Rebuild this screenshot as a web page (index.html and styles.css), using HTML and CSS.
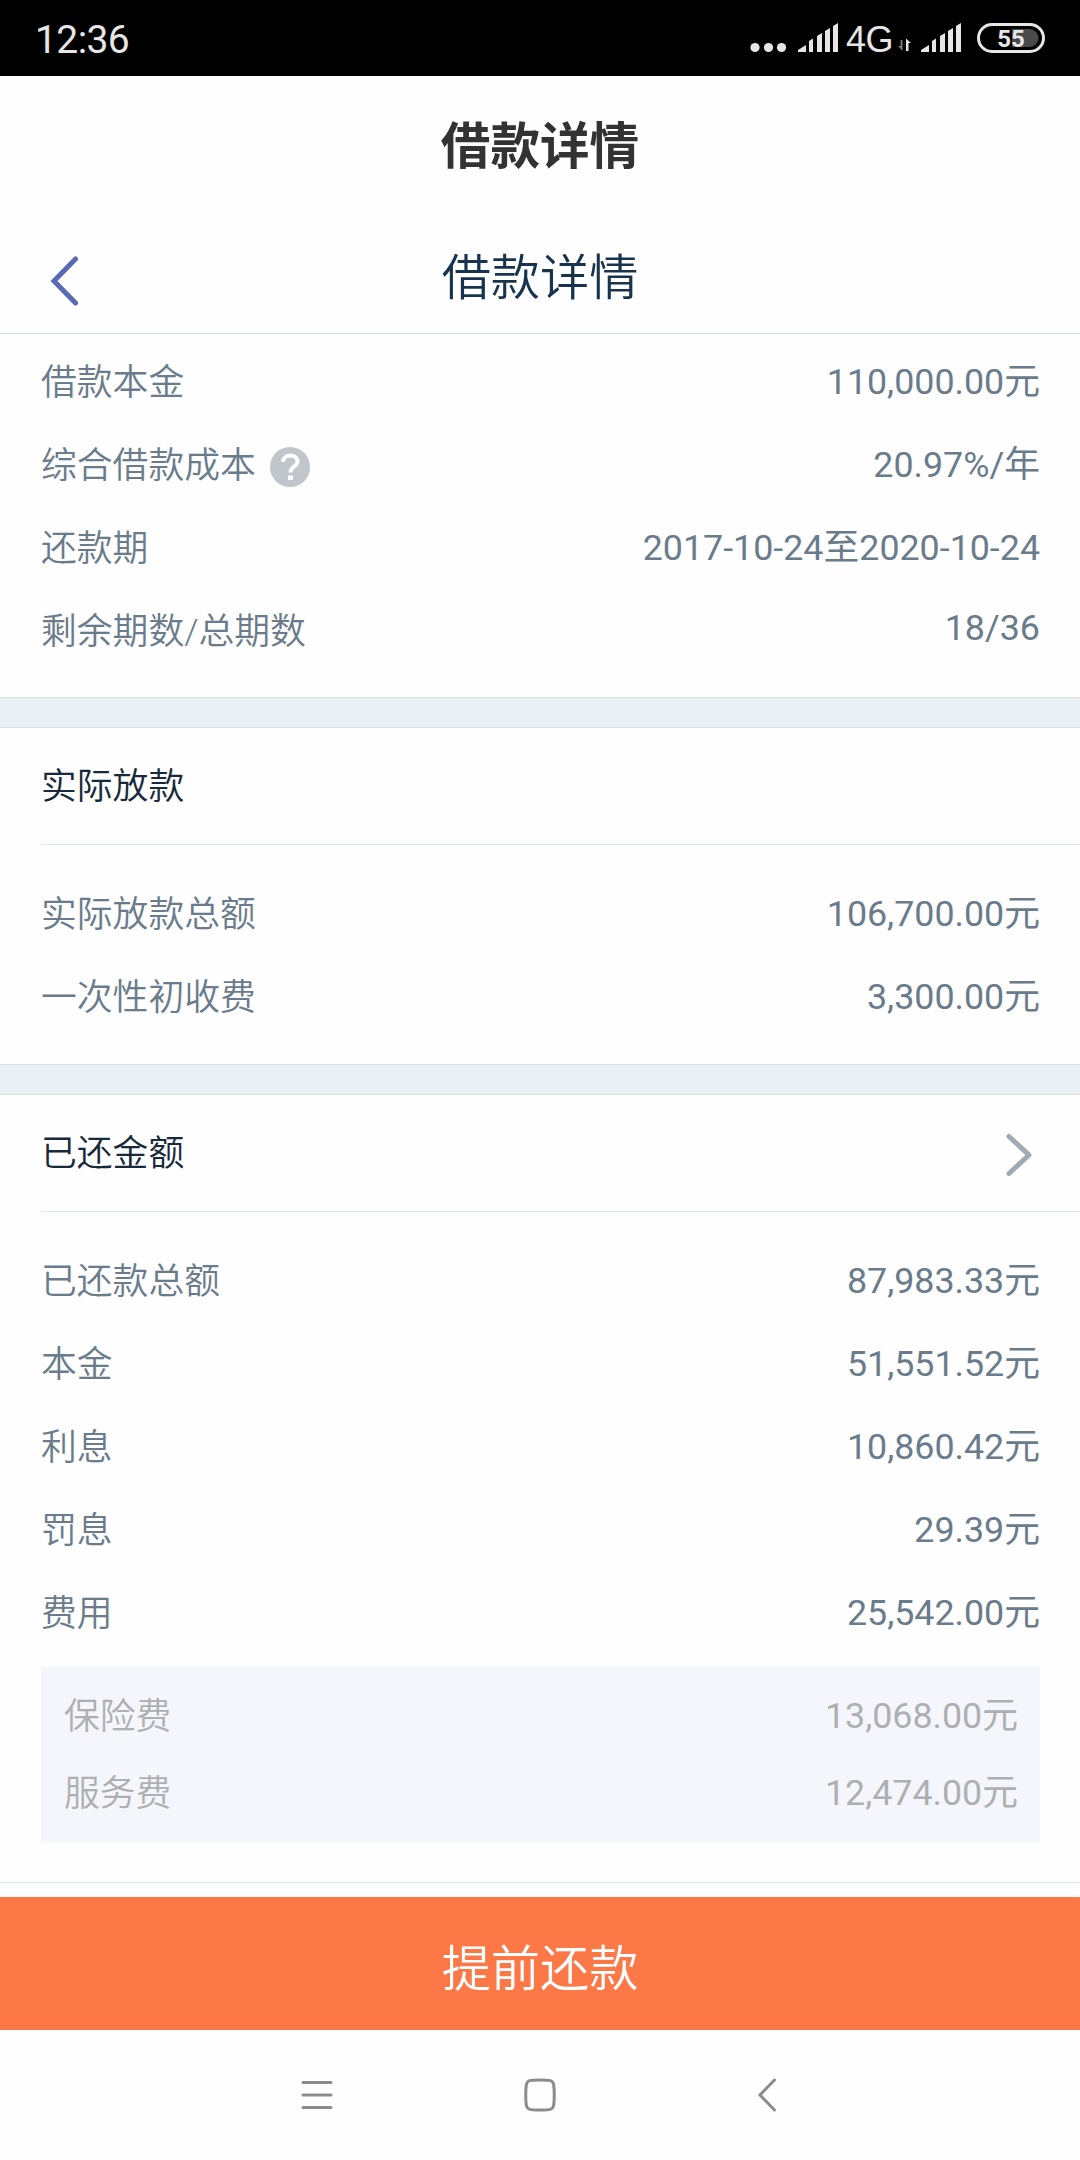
FILE: index.html
```html
<!DOCTYPE html>
<html lang="zh-CN">
<head>
  <meta charset="UTF-8" />
  <meta name="viewport" content="width=device-width, initial-scale=1.0" />
  <title>借款详情</title>
  <link rel="stylesheet" href="styles.css">
</head>
<body>
  <div class="status-bar">
    <span class="time">12:36</span>
    <svg class="status-icons" width="300" height="76" viewBox="0 0 300 76">
      <g fill="#e6e6e6">
        <circle cx="7" cy="47.5" r="4.6"/>
        <circle cx="20.5" cy="47.5" r="4.6"/>
        <circle cx="33.5" cy="47.5" r="4.6"/>
        <path id="signal" d="M50 52V50L58 45V52ZM61 52V41L65 38.5V52ZM69 52V36L74 33V52ZM77 52V31L82 28V52ZM85 52V26L90 23V52Z"/>
        <use href="#signal" x="123"/>
        <text x="98" y="52" class="network">4G</text>
        <path d="M158 38.5L163 43H160.500V51H158Z"/>
      </g>
      <path d="M154.500 51L150 46H152.500V40H154.500Z" fill="#777"/>
      <path d="M264 29H281.500A9 9 0 0 1 281.500 47H264Z" fill="#4a4a4a"/>
      <rect x="230.500" y="24.500" width="65" height="27" rx="13.500" fill="none" stroke="#e6e6e6" stroke-width="3"/>
      <text x="263" y="46.500" class="battery">55</text>
    </svg>
  </div>

  <div class="title-bar">借款详情</div>

  <div class="header">
    <svg class="back" width="30" height="50" viewBox="0 0 30 50">
      <path d="M27.500 3L6 25L27.500 47" fill="none" stroke="#5a69b5" stroke-width="5" stroke-linecap="round"/>
    </svg>
    <h1>借款详情</h1>
  </div>

  <div class="section summary">
    <div class="row"><span class="label">借款本金</span><span>110,000.00元</span></div>
    <div class="row">
      <span class="label with-help">综合借款成本
        <svg width="40" height="40" viewBox="0 0 40 40">
          <circle cx="20" cy="20" r="20" fill="#c0c6cb"/>
          <path d="M13 15C13 6.500 27.500 6.500 27.500 14.500C27.500 20 20.500 19 20.500 25.500" fill="none" stroke="#fff" stroke-width="4"/>
          <rect x="18" y="28.500" width="5" height="4.500" fill="#fff"/>
        </svg>
      </span>
      <span>20.97%/年</span>
    </div>
    <div class="row"><span class="label">还款期</span><span>2017-10-24至2020-10-24</span></div>
    <div class="row"><span class="label">剩余期数/总期数</span><span class="periods">18/36</span></div>
  </div>

  <div class="divider"></div>

  <div class="section">
    <h2>实际放款</h2>
    <div class="row"><span class="label">实际放款总额</span><span>106,700.00元</span></div>
    <div class="row"><span class="label">一次性初收费</span><span>3,300.00元</span></div>
  </div>

  <div class="divider"></div>

  <div class="section repaid">
    <h2>已还金额
      <svg width="30" height="46" viewBox="0 0 30 46">
        <path d="M5 4.500L25 23L5 41.500" fill="none" stroke="#9faab3" stroke-width="5" stroke-linecap="round" stroke-linejoin="round"/>
      </svg>
    </h2>
    <div class="row"><span class="label">已还款总额</span><span>87,983.33元</span></div>
    <div class="row"><span class="label">本金</span><span>51,551.52元</span></div>
    <div class="row"><span class="label">利息</span><span>10,860.42元</span></div>
    <div class="row"><span class="label">罚息</span><span>29.39元</span></div>
    <div class="row"><span class="label">费用</span><span>25,542.00元</span></div>
    <div class="fees">
      <div class="row"><span class="label">保险费</span><span>13,068.00元</span></div>
      <div class="row"><span class="label">服务费</span><span>12,474.00元</span></div>
    </div>
  </div>

  <button class="repay">提前还款</button>

  <div class="nav-bar">
    <svg width="32" height="34" viewBox="0 0 32 34">
      <path d="M2 4.500H30M2 17H30M2 29.500H30"/>
    </svg>
    <svg class="home" width="34" height="34" viewBox="0 0 34 34">
      <path d="M17 2C28 2 29.500 2.500 30.500 6C31.500 11 31.500 23 30.500 28C29.500 31.500 28 32 17 32C6 32 4.500 31.500 3.500 28C2.500 23 2.500 11 3.500 6C4.500 2.500 6 2 17 2Z"/>
    </svg>
    <svg width="20" height="34" viewBox="0 0 20 34">
      <path d="M17.500 2L3 17L17.500 32"/>
    </svg>
  </div>
</body>
</html>
```
FILE: styles.css
```css
* {
  box-sizing: border-box;
}
body {
  margin: 0;
  width: 1080px;
  height: 2160px;
  display: flex;
  flex-direction: column;
  background-color: #fefefe;
  font-family: Roboto, "Noto Sans CJK SC", sans-serif;
  font-size: 35.8px;
  color: #6a7b8b;
  overflow: hidden;
}
.status-bar {
  height: 76px;
  padding: 0 32px 0 35px;
  display: flex;
  justify-content: space-between;
  align-items: center;
  background-color: #000;
  color: #e6e6e6;
}
.time {
  font-size: 39px;
  line-height: 76px;
  padding-top: 4px;
  letter-spacing: -0.6px;
}
.network {
  font-family: "Liberation Sans", sans-serif;
  font-size: 36px;
  letter-spacing: -0.5px;
}
.battery {
  font-size: 24px;
  font-weight: bold;
  text-anchor: middle;
  fill: #e6e6e6;
}
.title-bar {
  height: 143px;
  line-height: 143px;
  text-align: center;
  font-size: 49.6px;
  font-weight: bold;
  color: #333;
}
/* page header with back arrow */
.header {
  height: 115px;
  padding: 5px 48px 0;
  display: grid;
  grid-template-columns: 30px 1fr 30px;
  align-items: center;
  border-bottom: 1px solid #d3dcdf;
}
h1 {
  margin: 0;
  line-height: 109px;
  text-align: center;
  font-size: 49.2px;
  font-weight: 350;
  color: #17334d;
}
.back {
  margin-top: 4px;
}
.section {
  padding-bottom: 25px;
}
.summary {
  padding-top: 7px;
  padding-bottom: 24px;
}
.row {
  display: flex;
  justify-content: space-between;
  height: 83px;
  line-height: 83px;
  padding: 0 40px 0 41px;
}
.label {
  line-height: 85px;
  font-weight: 350;
}
.with-help {
  height: 85px;
  display: flex;
  align-items: center;
  gap: 14px;
}
.with-help svg {
  margin-top: 1px;
}
.row .periods {
  line-height: 77px;
}
.divider {
  height: 31px;
  background-color: #ebf0f4;
  border-top: 1px solid #d5dfe4;
  border-bottom: 1px solid #d5dfe4;
}
h2 {
  margin: 0 0 28px 41px;
  padding: 2px 46px 0 0;
  height: 117px;
  line-height: 115px;
  display: flex;
  justify-content: space-between;
  align-items: center;
  border-bottom: 1px solid #dfe4e6;
  font-size: 35.8px;
  font-weight: 350;
  color: #17293a;
}
h2 svg {
  margin-top: 1px;
}
.repaid {
  padding-bottom: 39px;
  border-bottom: 1px solid #dfe4e4;
}
.fees {
  margin: 12px 40px 0 41px;
  padding: 11px 0;
  background-color: #f5f6fb;
  color: #adb0b3;
}
.fees .row {
  height: 77px;
  line-height: 77px;
  padding: 0 22px 0 23px;
}
.fees .label {
  line-height: 79px;
}
.repay {
  margin: 14px 0 0;
  padding: 2px 0 0;
  height: 133px;
  border: none;
  background-color: #fd7847;
  color: #fff;
  font-family: inherit;
  font-size: 49.2px;
  font-weight: 350;
}
/* android navigation keys */
.nav-bar {
  flex: 1;
  display: flex;
  justify-content: space-between;
  padding: 48px 303px 0 301px;
}
.nav-bar svg {
  fill: none;
  stroke: #8c8c8c;
  stroke-width: 3;
  stroke-linecap: round;
}
.nav-bar .home {
  margin-right: 10px;
}
```
